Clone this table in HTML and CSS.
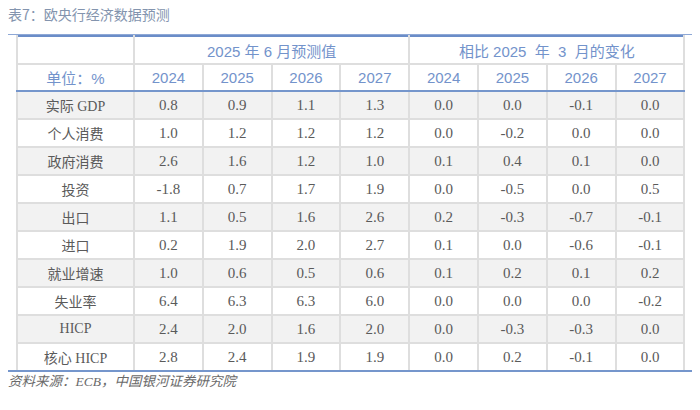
FILE: index.html
```html
<!DOCTYPE html>
<html lang="zh">
<head>
<meta charset="utf-8">
<link rel="stylesheet" href="styles.css">
</head>
<body>
<div class="page">
  <h1 class="title">表7：欧央行经济数据预测</h1>
  <div class="wrap">
    <table class="data">
      <colgroup>
        <col class="c-label">
        <col class="c-y"><col class="c-y"><col class="c-y"><col class="c-y">
        <col class="c-y"><col class="c-y"><col class="c-y"><col class="c-y">
      </colgroup>
      <thead>
        <tr class="h1">
          <th></th>
          <th colspan="4">2025 年 6 月预测值</th>
          <th colspan="4">相比 2025&nbsp; 年&nbsp; 3&nbsp; 月的变化</th>
        </tr>
        <tr class="h2">
          <th>单位：%</th>
          <th>2024</th><th>2025</th><th>2026</th><th>2027</th>
          <th>2024</th><th>2025</th><th>2026</th><th>2027</th>
        </tr>
      </thead>
      <tbody>
        <tr><td>实际 GDP</td><td>0.8</td><td>0.9</td><td>1.1</td><td>1.3</td><td>0.0</td><td>0.0</td><td>-0.1</td><td>0.0</td></tr>
        <tr><td>个人消费</td><td>1.0</td><td>1.2</td><td>1.2</td><td>1.2</td><td>0.0</td><td>-0.2</td><td>0.0</td><td>0.0</td></tr>
        <tr><td>政府消费</td><td>2.6</td><td>1.6</td><td>1.2</td><td>1.0</td><td>0.1</td><td>0.4</td><td>0.1</td><td>0.0</td></tr>
        <tr><td>投资</td><td>-1.8</td><td>0.7</td><td>1.7</td><td>1.9</td><td>0.0</td><td>-0.5</td><td>0.0</td><td>0.5</td></tr>
        <tr><td>出口</td><td>1.1</td><td>0.5</td><td>1.6</td><td>2.6</td><td>0.2</td><td>-0.3</td><td>-0.7</td><td>-0.1</td></tr>
        <tr><td>进口</td><td>0.2</td><td>1.9</td><td>2.0</td><td>2.7</td><td>0.1</td><td>0.0</td><td>-0.6</td><td>-0.1</td></tr>
        <tr><td>就业增速</td><td>1.0</td><td>0.6</td><td>0.5</td><td>0.6</td><td>0.1</td><td>0.2</td><td>0.1</td><td>0.2</td></tr>
        <tr><td>失业率</td><td>6.4</td><td>6.3</td><td>6.3</td><td>6.0</td><td>0.0</td><td>0.0</td><td>0.0</td><td>-0.2</td></tr>
        <tr><td>HICP</td><td>2.4</td><td>2.0</td><td>1.6</td><td>2.0</td><td>0.0</td><td>-0.3</td><td>-0.3</td><td>0.0</td></tr>
        <tr><td>核心 HICP</td><td>2.8</td><td>2.4</td><td>1.9</td><td>1.9</td><td>0.0</td><td>0.2</td><td>-0.1</td><td>0.0</td></tr>
      </tbody>
    </table>
  </div>
  <p class="source">资料来源：ECB，中国银河证券研究院</p>
</div>
</body>
</html>
```

FILE: styles.css
```css
html, body {
  margin: 0;
  padding: 0;
  background: #ffffff;
}

.page {
  padding: 0 8px;
  width: 684px;
}

.title {
  margin: 0;
  height: 34px;
  line-height: 28px;
  font-family: "Noto Sans CJK SC", "Liberation Sans", sans-serif;
  font-size: 14px;
  font-weight: normal;
  color: #8394ae;
}

.wrap {
  border-top: 1px solid #8ea8d6;
  border-bottom: 2px solid #7596cc;
  padding: 0 9px 0 8px;
}

.data {
  width: 668px;
  table-layout: fixed;
  border-collapse: collapse;
  border-top: 2px solid #6b8dc8;
}

.c-label { width: 117px; }
.c-y { width: 68.8px; }

.data th,
.data td {
  border: 2px solid #dedede;
  padding: 0;
  text-align: center;
  vertical-align: middle;
  white-space: nowrap;
}

.data tr:first-child th { border-top: none; }

.data th {
  font-family: "Liberation Sans", "Noto Sans CJK SC", sans-serif;
  font-size: 15px;
  font-weight: normal;
  color: #7393cb;
}

.h1 th { height: 26px; }
.h2 th {
  height: 25px;
  border-bottom: 2px solid #7596cc;
}

.data td {
  height: 26px;
  font-family: "Liberation Serif", "Noto Sans CJK SC", serif;
  font-size: 15px;
  color: #5a5a5a;
}

.data td:first-child {
  font-size: 14px;
}

.data tbody tr:nth-child(odd) td { background: #f2f2f2; }
.data tbody tr:last-child td { border-bottom: none; }

.source {
  margin: 0;
  line-height: 20px;
  font-family: "Liberation Serif", "Noto Sans CJK SC", serif;
  font-style: italic;
  font-size: 13.5px;
  color: #6a6a6a;
}
```
